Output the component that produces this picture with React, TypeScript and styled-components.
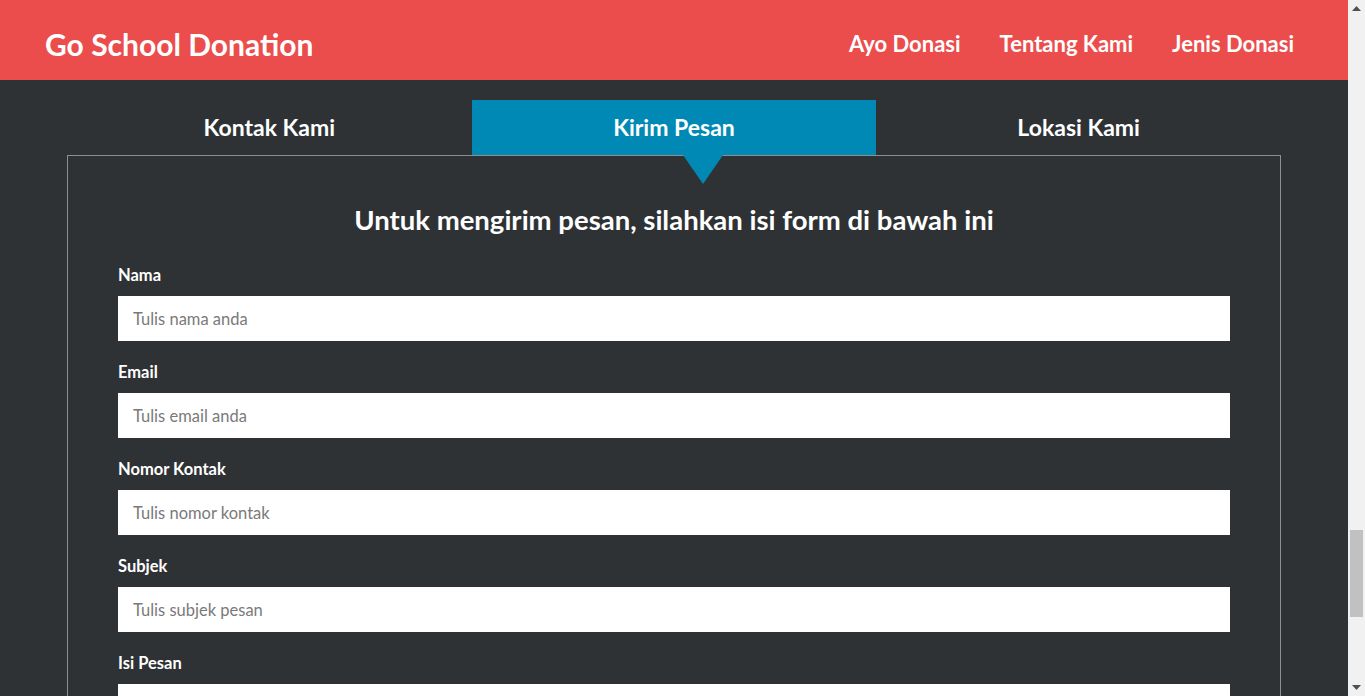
import React from 'react';
import styled, { createGlobalStyle } from 'styled-components';

const GlobalStyle = createGlobalStyle`
    body {
        margin: 0;
        background: #2e3235;
        font-family: Lato, "Open Sans", sans-serif;
    }
`

const Shell = styled.div`
    height: 100vh;
    display: flex;
    overflow: hidden;
`

const Page = styled.div`
    flex: 1;
    min-width: 0;
    overflow: hidden;
    background: #2e3235;
`

// window scrollbar as seen in the screenshot
const ScrollBar = styled.div`
    width: 17px;
    flex-shrink: 0;
    background: #f1f1f1;
    display: flex;
    flex-direction: column;
`

const ScrollArrow = styled.div`
    height: 17px;
    display: flex;
    align-items: center;
    justify-content: center;
`

const ScrollTrack = styled.div`
    flex: 1;
    padding: 0 2px;
`

const ScrollThumb = styled.div`
    height: 87px;
    background: #c1c1c1;
`

const Header = styled.header`
    height: 80px;
    box-sizing: border-box;
    background: #eb4d4c;
    display: flex;
    align-items: center;
    justify-content: space-between;
    padding: 0 54px 0 45px;
    color: #ffffff;
`

const Brand = styled.h1`
    margin: 0;
    font-size: 30px;
    font-weight: 700;
    padding-top: 8px;
`

const Nav = styled.nav`
    display: flex;
    gap: 39px;
    padding-top: 6px;

    a {
        color: #ffffff;
        text-decoration: none;
        font-size: 22px;
        font-weight: 700;
    }
`

const Main = styled.main`
    padding: 20px 67px 60px 67px;
`

const Tabs = styled.div`
    display: grid;
    grid-template-columns: repeat(3, 1fr);
`

const Tab = styled.div<{ $active?: boolean }>`
    position: relative;
    height: 55px;
    padding-bottom: 2px;
    box-sizing: border-box;
    display: flex;
    align-items: center;
    justify-content: center;
    color: #ffffff;
    font-size: 23px;
    font-weight: 700;
    background: ${p => (p.$active ? '#0189b5' : 'transparent')};

    &::after {
        content: '';
        display: ${p => (p.$active ? 'block' : 'none')};
        position: absolute;
        top: 100%;
        left: 211px;
        border-left: 20px solid transparent;
        border-right: 20px solid transparent;
        border-top: 29px solid #0189b5;
    }
`

const Panel = styled.section`
    border: 1px solid #8d9093;
    padding: 47px 50px 40px 50px;
    color: #ffffff;
`

const Title = styled.h2`
    margin: 0 0 28px 0;
    text-align: center;
    font-size: 27.5px;
    line-height: 34px;
    font-weight: 700;
`

const Field = styled.div`
    display: flex;
    flex-direction: column;
    margin-bottom: 21px;
`

const Label = styled.label`
    font-size: 16.5px;
    line-height: 20px;
    font-weight: 700;
    margin-bottom: 11px;
`

const Input = styled.input`
    height: 45px;
    border: 0;
    padding: 0 15px;
    box-sizing: border-box;
    font-family: Lato, "Open Sans", sans-serif;
    font-size: 16.5px;
    background: #ffffff;

    &::placeholder {
        color: #7a7a7a;
    }
    &:focus {
        outline: none;
    }
`

const TextArea = styled.textarea`
    height: 150px;
    border: 0;
    padding: 16px 15px;
    box-sizing: border-box;
    font-family: Lato, "Open Sans", sans-serif;
    font-size: 16.5px;
    resize: none;

    &::placeholder {
        color: #7a7a7a;
    }
`

const fields = [
    { label: 'Nama', placeholder: 'Tulis nama anda' },
    { label: 'Email', placeholder: 'Tulis email anda' },
    { label: 'Nomor Kontak', placeholder: 'Tulis nomor kontak' },
    { label: 'Subjek', placeholder: 'Tulis subjek pesan' },
];

const Arrow = ({ down }: { down?: boolean }) => (
    <svg width="9" height="5" viewBox="0 0 9 5">
        <path d={down ? 'M0 0h9L4.5 5z' : 'M0 5h9L4.5 0z'} fill="#505050" />
    </svg>
)

const App = () => (
    <Shell>
        <GlobalStyle />
        <Page>
            <Header>
                <Brand>Go School Donation</Brand>
                <Nav>
                    <a href="#">Ayo Donasi</a>
                    <a href="#">Tentang Kami</a>
                    <a href="#">Jenis Donasi</a>
                </Nav>
            </Header>
            <Main>
                <Tabs>
                    <Tab>Kontak Kami</Tab>
                    <Tab $active>Kirim Pesan</Tab>
                    <Tab>Lokasi Kami</Tab>
                </Tabs>
                <Panel>
                    <Title>Untuk mengirim pesan, silahkan isi form di bawah ini</Title>
                    {fields.map(f => (
                        <Field key={f.label}>
                            <Label>{f.label}</Label>
                            <Input placeholder={f.placeholder} />
                        </Field>
                    ))}
                    <Field>
                        <Label>Isi Pesan</Label>
                        <TextArea placeholder="Tulis pesan anda" />
                    </Field>
                </Panel>
            </Main>
        </Page>
        <ScrollBar>
            <ScrollArrow><Arrow /></ScrollArrow>
            <ScrollTrack>
                <ScrollThumb style={{ marginTop: 513 }} />
            </ScrollTrack>
            <ScrollArrow><Arrow down /></ScrollArrow>
        </ScrollBar>
    </Shell>
)

export default App;
